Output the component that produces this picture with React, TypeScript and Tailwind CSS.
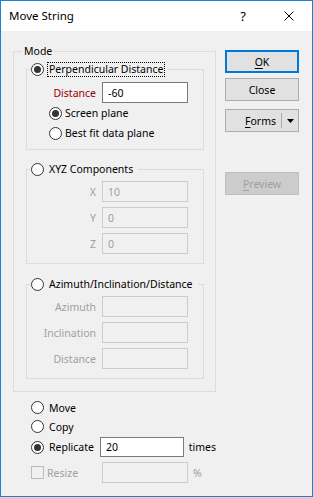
import React from "react";

const Radio = ({ checked }: { checked?: boolean }) => (
  <span className="w-[13px] h-[13px] rounded-full border border-[#333333] bg-white flex items-center justify-center shrink-0">
    {checked && <span className="w-[7px] h-[7px] rounded-full bg-[#333333]" />}
  </span>
);

const Input = ({ value, disabled, h = "h-[21px]" }: { value?: string; disabled?: boolean; h?: string }) => (
  <div
    className={
      "w-[86px] " +
      h +
      " border flex items-center pl-[5px] " +
      (disabled ? "border-[#cccccc] bg-[#f0f0f0] text-[#a0a0a0]" : "border-[#7a7a7a] bg-white text-black")
    }
  >
    {value}
  </div>
);

const Row = ({ label, value, red, disabled }: { label: string; value?: string; red?: boolean; disabled?: boolean }) => (
  <div className="flex items-center h-[21px]">
    <div className={"w-[69px] text-right " + (red ? "text-[#990000]" : disabled ? "text-[#a0a0a0]" : "text-black")}>{label}</div>
    <div className="ml-[6px]">
      <Input value={value} disabled={disabled} />
    </div>
  </div>
);

const GroupLegend = ({ text, checked, focus }: { text: string; checked?: boolean; focus?: boolean }) => (
  <legend className="ml-[4px] h-[16px] flex items-center">
    <Radio checked={checked} />
    <span
      className={
        "ml-[3px] px-[1px] h-[15px] flex items-center leading-none border " +
        (focus ? "border-dotted border-black" : "border-transparent")
      }
    >
      {text}
    </span>
    <span className="w-[3px]" />
  </legend>
);

const Btn = ({ children, cls }: { children: React.ReactNode; cls: string }) => (
  <div className={"w-[74px] h-[23px] flex items-center justify-center " + cls}>{children}</div>
);

export default function App() {
  return (
    <div className="w-[313px] h-[497px] border border-[#1883d7] bg-[#f0f0f0] flex flex-col font-['Noto_Sans',sans-serif] text-[10.5px] text-black leading-[16px]">
      {/* title bar */}
      <div className="h-[30px] bg-white flex items-center shrink-0">
        <span className="pl-[8px] text-[11.5px]">Move String</span>
        <div className="ml-auto flex h-full">
          <div className="w-[46px] h-full flex items-center justify-center text-[13px]">?</div>
          <div className="w-[46px] h-full flex items-center justify-center">
            <svg width="10" height="10" viewBox="0 0 10 10">
              <path d="M0.5 0.5 L9.5 9.5 M9.5 0.5 L0.5 9.5" stroke="#000" strokeWidth="1" />
            </svg>
          </div>
        </div>
      </div>

      {/* body */}
      <div className="flex pl-[12px] pt-[12px]">
        <div className="w-[203px] flex flex-col">
          <fieldset className="border border-[#dcdcdc] p-0 m-0">
            <legend className="ml-[8px] px-[2px] h-[16px] leading-[16px]">Mode</legend>
            <div className="pl-[12px] pt-[2px] pb-[12px] flex flex-col">
              {/* Perpendicular */}
              <fieldset className="w-[178px] border border-[#dcdcdc] p-0 m-0">
                <GroupLegend text="Perpendicular Distance" checked focus />
                <div className="flex flex-col pt-[5px] pb-[6px]">
                  <Row label="Distance" value="-60" red />
                  <div className="h-[20px] flex items-center pl-[22px]">
                    <Radio checked />
                    <span className="ml-[3px]">Screen plane</span>
                  </div>
                  <div className="h-[20px] flex items-center pl-[22px]">
                    <Radio />
                    <span className="ml-[3px]">Best fit data plane</span>
                  </div>
                </div>
              </fieldset>

              {/* XYZ */}
              <fieldset className="w-[178px] mt-[11px] border border-[#dcdcdc] p-0 m-0">
                <GroupLegend text="XYZ Components" />
                <div className="flex flex-col gap-[5px] pt-[4px] pb-[9px]">
                  <Row label="X" value="10" disabled />
                  <Row label="Y" value="0" disabled />
                  <Row label="Z" value="0" disabled />
                </div>
              </fieldset>

              {/* Azimuth */}
              <fieldset className="w-[178px] mt-[12px] border border-[#dcdcdc] p-0 m-0">
                <GroupLegend text="Azimuth/Inclination/Distance" />
                <div className="flex flex-col gap-[5px] pt-[4px] pb-[9px]">
                  <Row label="Azimuth" disabled />
                  <Row label="Inclination" disabled />
                  <Row label="Distance" disabled />
                </div>
              </fieldset>
            </div>
          </fieldset>

          {/* bottom options */}
          <div className="flex flex-col pl-[18px] pt-[6px]">
            <div className="h-[19px] flex items-center">
              <Radio />
              <span className="ml-[5px]">Move</span>
            </div>
            <div className="h-[19px] flex items-center">
              <Radio />
              <span className="ml-[5px]">Copy</span>
            </div>
            <div className="h-[20px] mt-[1px] flex items-center">
              <div className="w-[71px] flex items-center">
                <Radio checked />
                <span className="ml-[5px]">Replicate</span>
              </div>
              <Input value="20" h="h-[20px]" />
              <span className="ml-[5px]">times</span>
            </div>
            <div className="h-[21px] mt-[5px] flex items-center">
              <div className="w-[71px] flex items-center">
                <span className="w-[13px] h-[13px] border border-[#bcbcbc] shrink-0" />
                <span className="ml-[3px] text-[#a0a0a0]">Resize</span>
              </div>
              <Input disabled />
              <span className="ml-[5px] text-[#a0a0a0]">%</span>
            </div>
          </div>
        </div>

        {/* buttons */}
        <div className="ml-[9px] pt-[7px] flex flex-col">
          <Btn cls="border-2 border-[#0078d7] bg-[#e1e1e1]">
            <span>
              <span className="underline underline-offset-2">O</span>K
            </span>
          </Btn>
          <div className="mt-[5px]">
            <Btn cls="border border-[#adadad] bg-[#e1e1e1]">Close</Btn>
          </div>
          <div className="mt-[8px]">
            <div className="w-[74px] h-[23px] border border-[#adadad] bg-[#e1e1e1] flex items-center">
              <div className="flex-1 flex justify-end pr-[5px]">
                <span>
                  <span className="underline underline-offset-2">F</span>orms
                </span>
              </div>
              <div className="w-px h-[15px] bg-[#adadad]" />
              <div className="w-[16px] flex items-center justify-center">
                <svg width="7" height="4" viewBox="0 0 7 4">
                  <path d="M0 0 H7 L3.5 4 Z" fill="#000" />
                </svg>
              </div>
            </div>
          </div>
          <div className="mt-[40px]">
            <Btn cls="border border-[#bfbfbf] bg-[#cccccc] text-[#a0a0a0]">
              <span>
                <span className="underline underline-offset-2">P</span>review
              </span>
            </Btn>
          </div>
        </div>
      </div>
    </div>
  );
}
